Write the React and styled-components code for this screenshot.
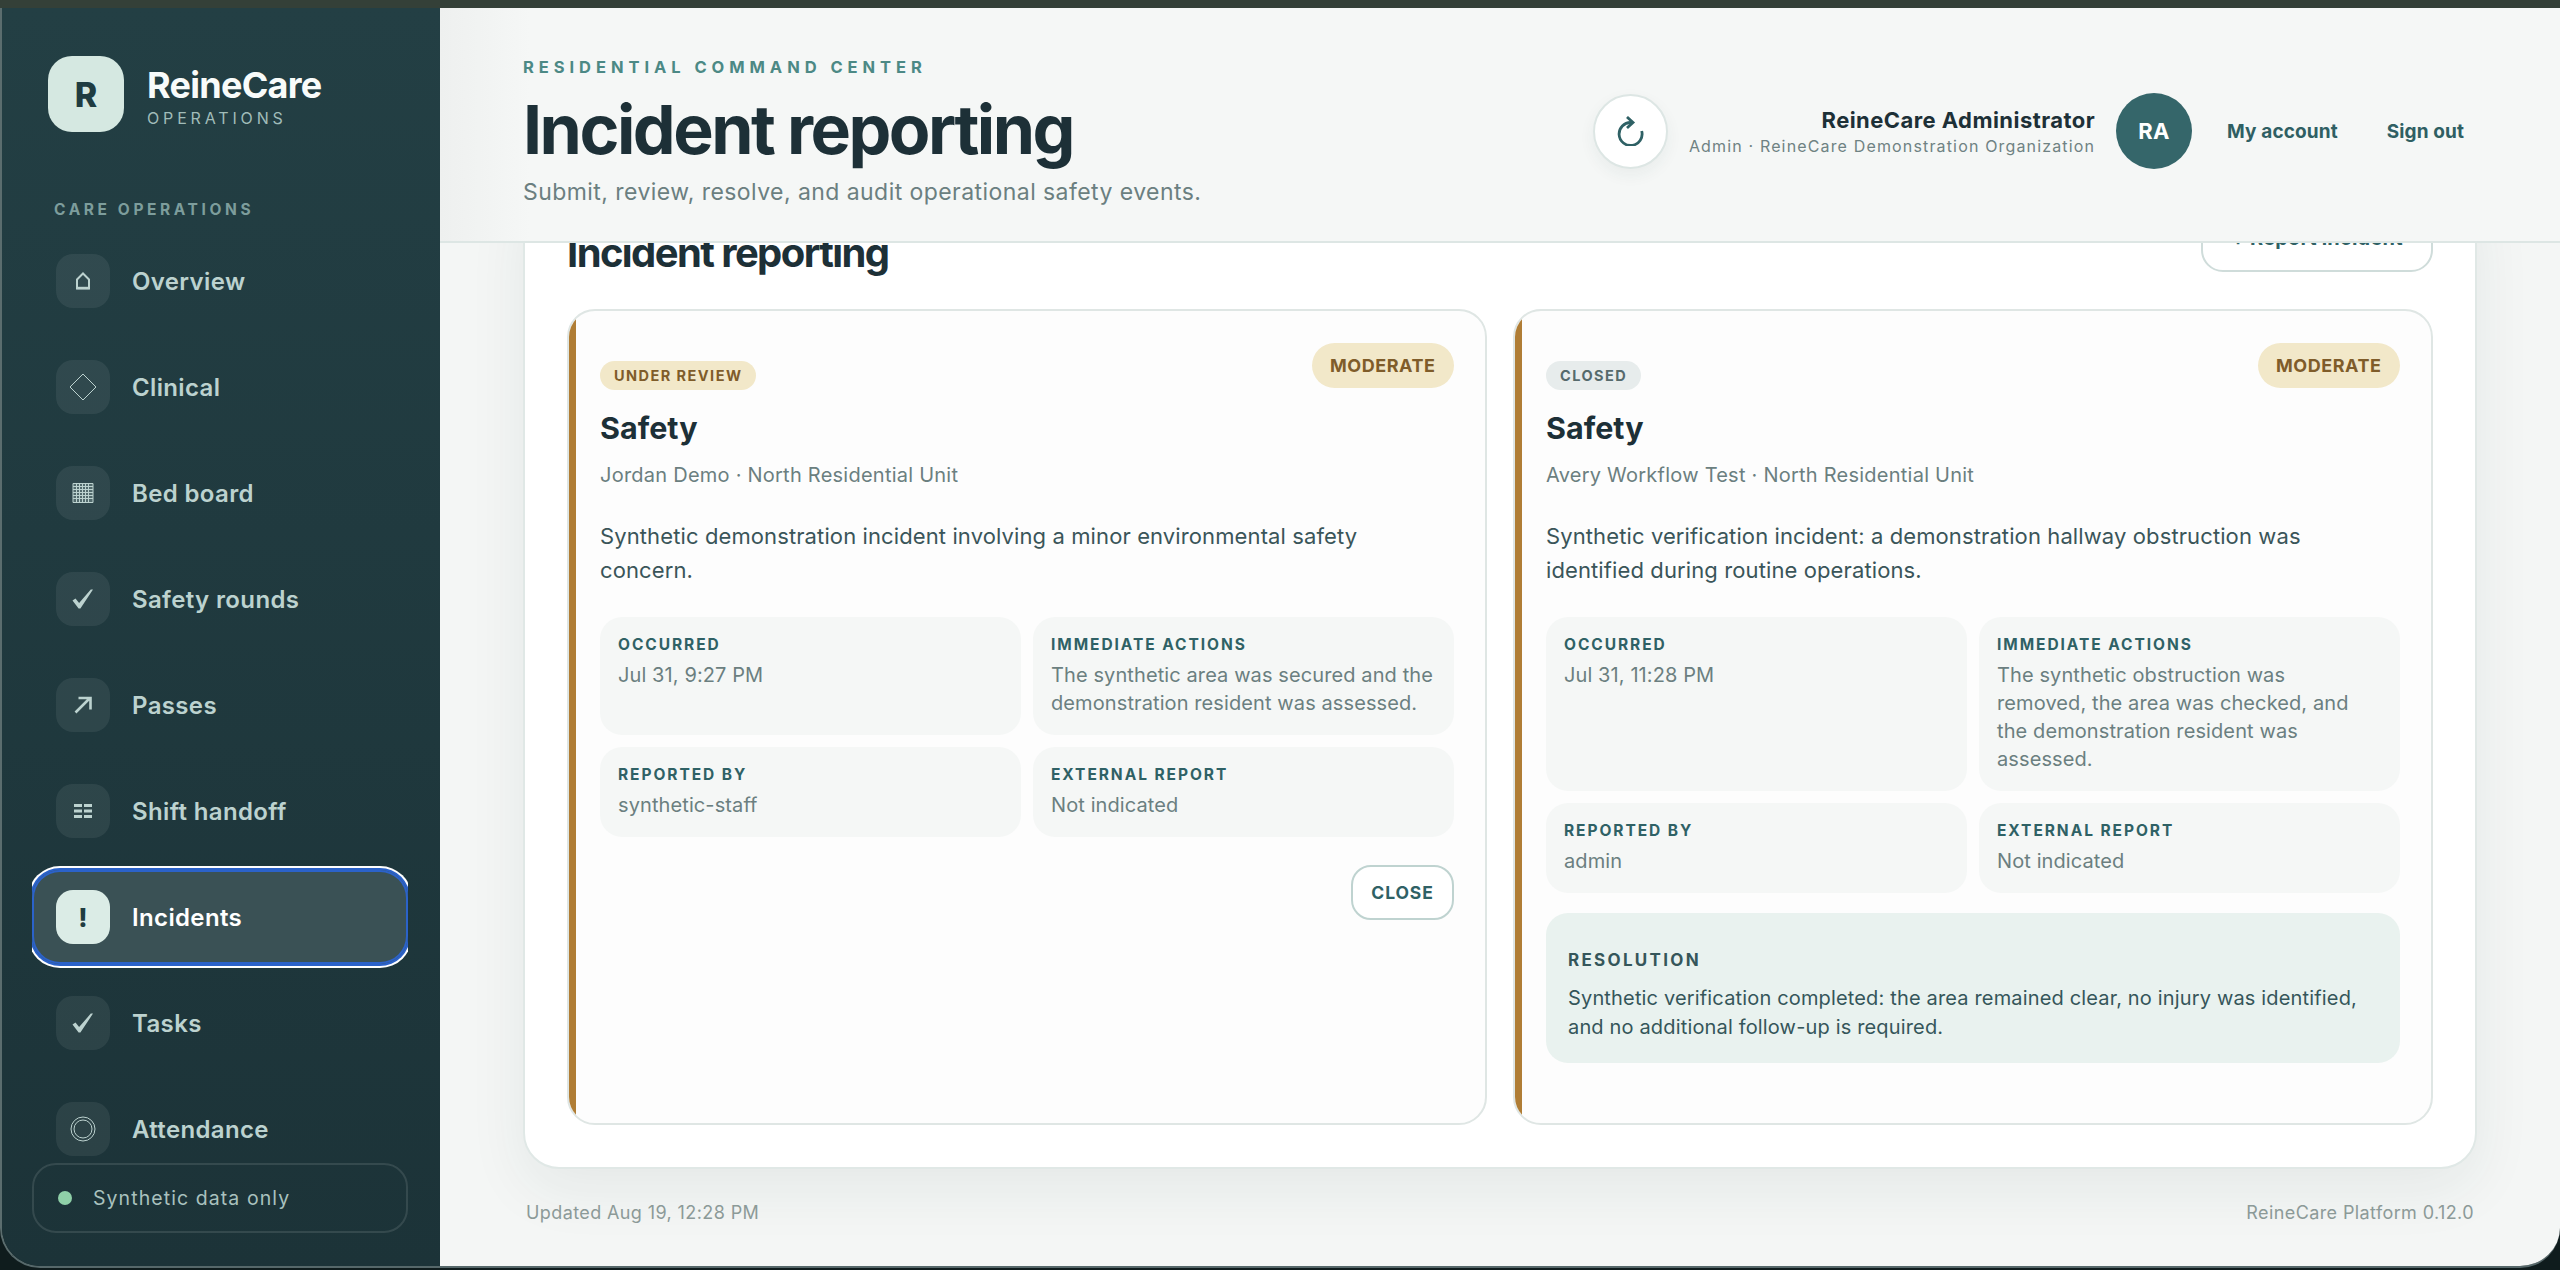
import styled, { createGlobalStyle } from "styled-components";

const GlobalStyle = createGlobalStyle`
    html, body {
        margin: 0;
        padding: 0;
        height: 100%;
        overflow: hidden;
        background: #0f1c1d;
    }
    body {
        font-family: Inter, "Noto Sans", "Liberation Sans", sans-serif;
        -webkit-font-smoothing: antialiased;
    }
    * { box-sizing: border-box; }
`;

const Desktop = styled.div`
    width: 2560px;
    height: 1270px;
    background: linear-gradient(180deg, #344038 0, #344038 8px, #0f1c1d 8px);
    padding-top: 8px;
`;

const Frame = styled.div`
    display: flex;
    height: 1260px;
    border-left: 2px solid #5b6d6e;
    border-bottom: 2px solid #56686a;
    border-radius: 0 0 40px 40px;
    overflow: hidden;
`;

const Sidebar = styled.aside`
    flex: none;
    width: 438px;
    display: flex;
    flex-direction: column;
    padding: 48px 32px 33px 30px;
    background: linear-gradient(180deg, #233f44 0%, #1c3338 100%);
`;

const Brand = styled.div`
    display: flex;
    align-items: center;
    gap: 23px;
    margin-left: 16px;
`;

const LogoMark = styled.div`
    width: 76px;
    height: 76px;
    display: flex;
    align-items: center;
    justify-content: center;
    border-radius: 24px;
    background: #d5e8e1;
    color: #1f3c41;
    font-size: 34px;
    font-weight: 800;
`;

const BrandName = styled.div`
    padding-top: 3px;
    color: #f8fbfa;
    font-size: 36px;
    line-height: 42px;
    font-weight: 700;
    letter-spacing: -0.02em;
`;

const BrandSub = styled.div`
    margin-top: 2px;
    color: #a0bcb9;
    font-size: 16px;
    line-height: 20px;
    letter-spacing: 0.24em;
`;

const NavLabel = styled.div`
    margin: 69px 0 15px 22px;
    color: #7d9d9c;
    font-size: 15.5px;
    line-height: 18px;
    font-weight: 700;
    letter-spacing: 0.232em;
`;

const Nav = styled.nav`
    flex: 1;
    min-height: 0;
    display: flex;
    flex-direction: column;
    gap: 12px;
    overflow: hidden;
    margin-top: -4px;
    padding-top: 4px;
`;

const NavItem = styled.a`
    flex: none;
    height: 94px;
    display: flex;
    align-items: center;
    gap: 22px;
    padding: 0 24px;
    border-radius: 28px;
    color: ${({ $active }) => ($active ? "#ffffff" : "#bcd2cf")};
    background: ${({ $active }) => ($active ? "#3a5155" : "transparent")};
    box-shadow: ${({ $active }) =>
        $active ? "inset 0 0 0 2px #2b62c9, 0 0 0 2px #2b62c9, 0 0 0 4px #ffffff" : "none"};
    font-size: 24px;
    font-weight: 600;
    letter-spacing: 0.015em;
`;

const NavIcon = styled.span`
    flex: none;
    width: 54px;
    height: 54px;
    display: flex;
    align-items: center;
    justify-content: center;
    border-radius: 17px;
    background: ${({ $active }) => ($active ? "#dbece6" : "rgba(255, 255, 255, 0.07)")};
    color: ${({ $active }) => ($active ? "#1f3c41" : "#bcd2cf")};
    font-size: 26px;
    font-weight: 800;
`;

const DataNote = styled.div`
    flex: none;
    height: 70px;
    display: flex;
    align-items: center;
    gap: 21px;
    padding: 0 24px;
    border: 2px solid rgba(255, 255, 255, 0.11);
    border-radius: 24px;
    color: #a9c1be;
    font-size: 19.5px;
    letter-spacing: 0.055em;
`;

const Dot = styled.span`
    flex: none;
    width: 14px;
    height: 14px;
    border-radius: 50%;
    background: #8fd0a8;
`;

const Main = styled.main`
    flex: 1;
    min-width: 0;
    display: flex;
    flex-direction: column;
    background: #f4f6f5;
`;

const Header = styled.header`
    position: relative;
    z-index: 2;
    flex: none;
    display: flex;
    align-items: center;
    justify-content: space-between;
    padding: 50px 96px 33px 83px;
    background: linear-gradient(90deg, #eef0ef 0, #f5f7f6 90px);
    border-bottom: 2px solid #dde6e4;
`;

const Eyebrow = styled.div`
    color: #4c8985;
    font-size: 16.5px;
    line-height: 18px;
    font-weight: 700;
    letter-spacing: 0.3em;
`;

const PageTitle = styled.h1`
    margin: 18px 0 0;
    color: #1d3037;
    font-size: 68px;
    line-height: 70px;
    font-weight: 700;
    letter-spacing: -0.037em;
`;

const PageSub = styled.p`
    margin: 12px 0 0;
    color: #6b7f80;
    font-size: 23px;
    line-height: 32px;
    letter-spacing: 0.019em;
`;

const Account = styled.div`
    display: flex;
    align-items: center;
    margin-bottom: 4px;
`;

const RefreshButton = styled.button`
    width: 75px;
    height: 75px;
    display: flex;
    align-items: center;
    justify-content: center;
    margin-right: 21px;
    padding: 0;
    border: 2px solid #dde6e4;
    border-radius: 50%;
    background: #ffffff;
    box-shadow: 0 6px 16px rgba(30, 60, 60, 0.06);
`;

const UserText = styled.div`
    text-align: right;
    margin-right: 21px;
`;

const UserName = styled.div`
    color: #1d3037;
    font-size: 22px;
    line-height: 28px;
    font-weight: 700;
    letter-spacing: 0.02em;
`;

const UserRole = styled.div`
    margin-top: 2px;
    color: #6f8283;
    font-size: 16px;
    line-height: 20px;
    letter-spacing: 0.072em;
`;

const Avatar = styled.div`
    width: 76px;
    height: 76px;
    display: flex;
    align-items: center;
    justify-content: center;
    margin-right: 35px;
    border-radius: 50%;
    background: #35666a;
    color: #ffffff;
    font-size: 22px;
    font-weight: 700;
    letter-spacing: 0.02em;
`;

const HeaderLink = styled.a`
    margin-left: ${({ $first }) => ($first ? "0" : "49px")};
    color: #2f5f63;
    font-size: 19px;
    font-weight: 700;
    letter-spacing: 0.006em;
`;

const Scroller = styled.div`
    flex: 1;
    min-height: 0;
    overflow: hidden;
    padding: 0 83px;
`;

const Panel = styled.section`
    margin-top: -63px;
    padding: 22px 42px 42px;
    border: 2px solid #e0e8e6;
    border-radius: 36px;
    background: #ffffff;
    box-shadow: 0 20px 60px rgba(30, 60, 60, 0.07);
`;

const PanelHead = styled.div`
    display: flex;
    align-items: center;
    justify-content: space-between;
    height: 68px;
`;

const PanelTitle = styled.h2`
    margin: 30px 0 0;
    color: #1d3037;
    font-size: 40px;
    line-height: 46px;
    font-weight: 700;
    letter-spacing: -0.04em;
`;

const ReportButton = styled.button`
    width: 232px;
    height: 68px;
    padding: 0;
    border: 2px solid #cfdcda;
    border-radius: 22px;
    background: #ffffff;
    color: #2f6165;
    font: 700 20px Inter, sans-serif;
    letter-spacing: 0.01em;
`;

const Cards = styled.div`
    display: grid;
    grid-template-columns: 1fr 1fr;
    gap: 26px;
    margin-top: 37px;
`;

const Card = styled.article`
    position: relative;
    display: flex;
    flex-direction: column;
    padding: 32px 31px 60px;
    border: 2px solid #dfe6e4;
    border-radius: 28px;
    background: #fdfdfd;
    overflow: hidden;

    &::before {
        content: "";
        position: absolute;
        top: 0;
        bottom: 0;
        left: -2px;
        width: 9px;
        background: #b07d35;
    }
`;

const CardTop = styled.div`
    display: flex;
    align-items: flex-start;
    justify-content: space-between;
`;

const Status = styled.span`
    display: inline-block;
    margin-top: 18px;
    height: 29px;
    padding: 0 14px;
    border-radius: 15px;
    background: ${({ $tone }) => ($tone === "closed" ? "#e7ecec" : "#f2e8c9")};
    color: ${({ $tone }) => ($tone === "closed" ? "#566a6c" : "#7f5c2a")};
    font-size: 14.5px;
    line-height: 29px;
    font-weight: 700;
    letter-spacing: 0.1em;
`;

const Severity = styled.span`
    height: 45px;
    padding: 0 18.5px;
    border-radius: 23px;
    background: #f2e8c9;
    color: #7f5c2a;
    font-size: 18px;
    line-height: 45px;
    font-weight: 700;
    letter-spacing: 0.03em;
`;

const CardTitle = styled.h3`
    margin: 18px 0 0;
    color: #1d3037;
    font-size: 30.5px;
    line-height: 40px;
    font-weight: 700;
`;

const CardMeta = styled.div`
    margin-top: 13px;
    color: #6b7f80;
    font-size: 20px;
    line-height: 28px;
    letter-spacing: 0.012em;
`;

const CardBody = styled.p`
    margin: 30px 0 0;
    color: #3a5559;
    font-size: 22px;
    line-height: 34px;
    letter-spacing: 0.005em;
`;

const Facts = styled.div`
    display: grid;
    grid-template-columns: 1fr 1fr;
    gap: 12px;
    margin-top: 30px;
`;

const Fact = styled.div`
    padding: 19px 20px 18px 18px;
    border-radius: 22px;
    background: #f5f7f6;
`;

const FactLabel = styled.div`
    color: #2f6165;
    font-size: 15.5px;
    line-height: 18px;
    font-weight: 700;
    letter-spacing: 0.125em;
`;

const FactValue = styled.div`
    margin-top: 7px;
    color: #6b7f80;
    font-size: 20px;
    line-height: 28px;
    letter-spacing: 0.005em;
`;

const CardActions = styled.div`
    display: flex;
    justify-content: flex-end;
    margin-top: 28px;
`;

const CloseButton = styled.button`
    width: 103px;
    height: 55px;
    padding: 0;
    border: 2px solid #bfd3d0;
    border-radius: 20px;
    background: #ffffff;
    color: #2f6165;
    font: 700 17.5px Inter, sans-serif;
    letter-spacing: 0.05em;
`;

const Resolution = styled.div`
    margin-top: 20px;
    padding: 38px 22px 21px;
    border-radius: 22px;
    background: #e9f2ef;
`;

const ResolutionLabel = styled.div`
    color: #35565a;
    font-size: 17px;
    line-height: 18px;
    font-weight: 700;
    letter-spacing: 0.135em;
`;

const ResolutionText = styled.p`
    margin: 15px 0 0;
    color: #35565a;
    font-size: 20px;
    line-height: 29px;
    letter-spacing: 0.008em;
`;

const Footer = styled.footer`
    display: flex;
    justify-content: space-between;
    margin-top: 33px;
    padding: 0 3px;
    color: #8c9a98;
    font-size: 18px;
    line-height: 22px;
    letter-spacing: 0.022em;
`;

const HomeIcon = () => (
    <svg width="16" height="18" viewBox="0 0 16 18" fill="none" stroke="currentColor" strokeWidth="2">
        <path d="M2 16.5V7.5L8 1.5l6 6v9z" />
        <path d="M1.5 16h13" strokeWidth="2.4" />
    </svg>
);

const DiamondIcon = () => (
    <svg width="28" height="28" viewBox="0 0 28 28" fill="none" stroke="currentColor" strokeWidth="1">
        <path d="M14 1l13 13-13 13L1 14z" />
    </svg>
);

const GridIcon = () => (
    <svg width="22" height="20" viewBox="0 0 22 20" fill="none" stroke="currentColor" strokeWidth="1">
        <path d="M1 .5h20v19H1z" fill="currentColor" fillOpacity=".25" />
        <path d="M1 3.5h20M1 6.5h20M1 9.5h20M1 12.5h20M1 15.5h20M4.5 0v20M7.5 0v20M10.5 0v20M13.5 0v20M16.5 0v20" />
    </svg>
);

const CheckIcon = () => (
    <svg width="22" height="20" viewBox="0 0 22 20" fill="currentColor">
        <path d="M0.5 11.5l3-2 3.6 4.6L18.8 0.6h2.2L8.4 19.4H6.6z" />
    </svg>
);

const ArrowIcon = () => (
    <svg width="18" height="18" viewBox="0 0 18 18" fill="none" stroke="currentColor" strokeWidth="2.6">
        <path d="M1.5 16.5L16 2M4.5 2H16.5V13.5" />
    </svg>
);

const HandoffIcon = () => (
    <svg width="18" height="16" viewBox="0 0 18 16" fill="none" stroke="currentColor" strokeWidth="3">
        <path d="M0 2.5h8M10 2.5h8M0 8h8M10 8h8M0 13.5h8M10 13.5h8" />
    </svg>
);

const RingIcon = () => (
    <svg width="26" height="26" viewBox="0 0 26 26" fill="none" stroke="currentColor" strokeWidth="1">
        <circle cx="13" cy="13" r="12" />
        <circle cx="13" cy="13" r="9" />
    </svg>
);

const RefreshIcon = () => (
    <svg width="28" height="30" viewBox="0 0 28 30" fill="none" stroke="#2f6165" strokeWidth="2.8">
        <path d="M15 6.5A11.5 11.5 0 1 0 25.7 15" />
        <path d="M11 1l6 5.5-6 5.5" />
    </svg>
);

const navItems = [
    { label: "Overview", icon: <HomeIcon /> },
    { label: "Clinical", icon: <DiamondIcon /> },
    { label: "Bed board", icon: <GridIcon /> },
    { label: "Safety rounds", icon: <CheckIcon /> },
    { label: "Passes", icon: <ArrowIcon /> },
    { label: "Shift handoff", icon: <HandoffIcon /> },
    { label: "Incidents", icon: "!", active: true },
    { label: "Tasks", icon: <CheckIcon /> },
    { label: "Attendance", icon: <RingIcon /> },
];

const incidents = [
    {
        status: "UNDER REVIEW",
        tone: "review",
        meta: "Jordan Demo · North Residential Unit",
        body: "Synthetic demonstration incident involving a minor environmental safety concern.",
        facts: [
            ["OCCURRED", "Jul 31, 9:27 PM"],
            ["IMMEDIATE ACTIONS", "The synthetic area was secured and the demonstration resident was assessed."],
            ["REPORTED BY", "synthetic-staff"],
            ["EXTERNAL REPORT", "Not indicated"],
        ],
        canClose: true,
    },
    {
        status: "CLOSED",
        tone: "closed",
        meta: "Avery Workflow Test · North Residential Unit",
        body: "Synthetic verification incident: a demonstration hallway obstruction was identified during routine operations.",
        facts: [
            ["OCCURRED", "Jul 31, 11:28 PM"],
            ["IMMEDIATE ACTIONS", "The synthetic obstruction was removed, the area was checked, and the demonstration resident was assessed."],
            ["REPORTED BY", "admin"],
            ["EXTERNAL REPORT", "Not indicated"],
        ],
        resolution: "Synthetic verification completed: the area remained clear, no injury was identified, and no additional follow-up is required.",
    },
];

function IncidentCard({ incident }) {
    return (
        <Card>
            <CardTop>
                <div>
                    <Status $tone={incident.tone}>{incident.status}</Status>
                    <CardTitle>Safety</CardTitle>
                </div>
                <Severity>MODERATE</Severity>
            </CardTop>
            <CardMeta>{incident.meta}</CardMeta>
            <CardBody>{incident.body}</CardBody>
            <Facts>
                {incident.facts.map(([label, value]) => (
                    <Fact key={label}>
                        <FactLabel>{label}</FactLabel>
                        <FactValue>{value}</FactValue>
                    </Fact>
                ))}
            </Facts>
            {incident.canClose && (
                <CardActions>
                    <CloseButton>CLOSE</CloseButton>
                </CardActions>
            )}
            {incident.resolution && (
                <Resolution>
                    <ResolutionLabel>RESOLUTION</ResolutionLabel>
                    <ResolutionText>{incident.resolution}</ResolutionText>
                </Resolution>
            )}
        </Card>
    );
}

export default function App() {
    return (
        <Desktop>
            <GlobalStyle />
            <Frame>
                <Sidebar>
                    <Brand>
                        <LogoMark>R</LogoMark>
                        <div>
                            <BrandName>ReineCare</BrandName>
                            <BrandSub>OPERATIONS</BrandSub>
                        </div>
                    </Brand>
                    <NavLabel>CARE OPERATIONS</NavLabel>
                    <Nav>
                        {navItems.map((item) => (
                            <NavItem key={item.label} $active={item.active}>
                                <NavIcon $active={item.active}>{item.icon}</NavIcon>
                                {item.label}
                            </NavItem>
                        ))}
                    </Nav>
                    <DataNote>
                        <Dot />
                        Synthetic data only
                    </DataNote>
                </Sidebar>
                <Main>
                    <Header>
                        <div>
                            <Eyebrow>RESIDENTIAL COMMAND CENTER</Eyebrow>
                            <PageTitle>Incident reporting</PageTitle>
                            <PageSub>Submit, review, resolve, and audit operational safety events.</PageSub>
                        </div>
                        <Account>
                            <RefreshButton><RefreshIcon /></RefreshButton>
                            <UserText>
                                <UserName>ReineCare Administrator</UserName>
                                <UserRole>Admin · ReineCare Demonstration Organization</UserRole>
                            </UserText>
                            <Avatar>RA</Avatar>
                            <HeaderLink $first>My account</HeaderLink>
                            <HeaderLink>Sign out</HeaderLink>
                        </Account>
                    </Header>
                    <Scroller>
                        <Panel>
                            <PanelHead>
                                <PanelTitle>Incident reporting</PanelTitle>
                                <ReportButton>+ Report incident</ReportButton>
                            </PanelHead>
                            <Cards>
                                {incidents.map((incident) => (
                                    <IncidentCard key={incident.status} incident={incident} />
                                ))}
                            </Cards>
                        </Panel>
                        <Footer>
                            <span>Updated Aug 19, 12:28 PM</span>
                            <span>ReineCare Platform 0.12.0</span>
                        </Footer>
                    </Scroller>
                </Main>
            </Frame>
        </Desktop>
    );
}
